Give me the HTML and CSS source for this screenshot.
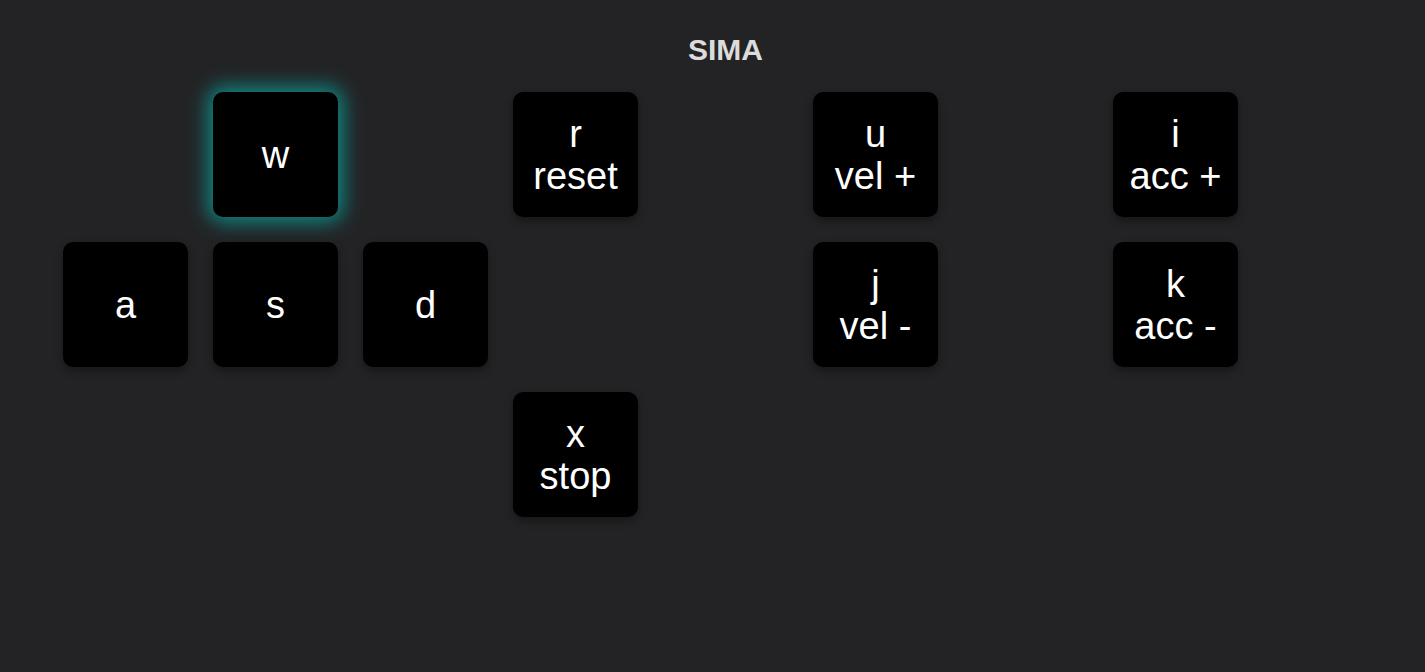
FILE: index.html
```html
<!DOCTYPE html>
<html lang="en">
<head>
    <meta charset="UTF-8">
    <title>SIMA</title>
    <link rel="stylesheet" href="styles.css">
</head>
<body>
    <div class="board">
        <div class="title">SIMA</div>
        <div class="keys">
            <div class="key active c2 r1">w</div>
            <div class="key c4 r1">r<br>reset</div>
            <div class="key c6 r1">u<br>vel +</div>
            <div class="key c8 r1">i<br>acc +</div>
            <div class="key c1 r2">a</div>
            <div class="key c2 r2">s</div>
            <div class="key c3 r2">d</div>
            <div class="key c6 r2">j<br>vel -</div>
            <div class="key c8 r2">k<br>acc -</div>
            <div class="key c4 r3">x<br>stop</div>
        </div>
    </div>
</body>
</html>
```

FILE: styles.css
```css
html{
    height: 100%;
}
body{
    margin: 0;
    height: 100%;
    background: #232325;
    font-family: "Liberation Sans", Arial, sans-serif;
}
.board{
    width: 1325px;
    margin-left: 63px;
    padding-top: 33px;
}
.title{
    text-align: center;
    color: #dcdcdc;
    font-weight: bold;
    font-size: 30px;
    line-height: 34px;
    margin-bottom: 25px;
}
.keys{
    display: grid;
    grid-template-columns: repeat(9, 125px);
    grid-auto-rows: 125px;
    gap: 25px;
}
.key{
    display: flex;
    align-items: center;
    justify-content: center;
    text-align: center;
    background: #000;
    color: #fff;
    border-radius: 10px;
    font-size: 38px;
    line-height: 42px;
    box-shadow: 0 4px 8px rgba(0,0,0,0.35);
}
.active{
    box-shadow: 0 0 20px 5px rgba(10,165,160,0.8);
}
.c1{grid-column: 1;}
.c2{grid-column: 2;}
.c3{grid-column: 3;}
.c4{grid-column: 4;}
.c6{grid-column: 6;}
.c8{grid-column: 8;}
.r1{grid-row: 1;}
.r2{grid-row: 2;}
.r3{grid-row: 3;}
```
